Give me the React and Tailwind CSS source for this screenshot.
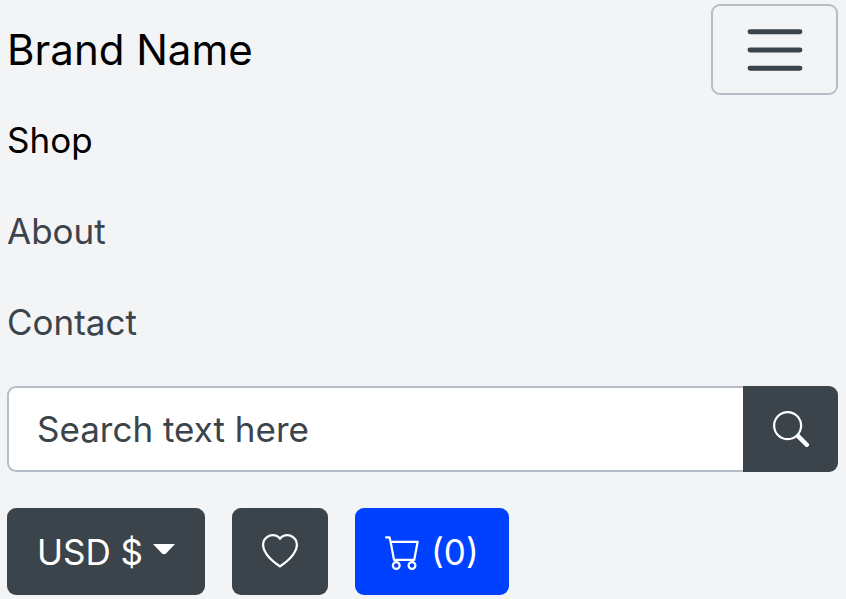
import React from "react";
import { BsSearch, BsHeart, BsCart } from "react-icons/bs";

const links = [
  { label: "Shop", active: true },
  { label: "About", active: false },
  { label: "Contact", active: false },
];

function MenuIcon() {
  return (
    <svg viewBox="0 0 30 30" className="size-[68px]" fill="none" stroke="#3b434b" strokeWidth="2.2" strokeLinecap="round" strokeMiterlimit="10" aria-hidden="true">
      <path d="M4 7h22M4 15h22M4 23h22" />
    </svg>
  );
}

function Caret() {
  return (
    <svg viewBox="0 0 22 11" className="mb-1 ml-2.5 h-[11px] w-[22px]" fill="currentColor" aria-hidden="true">
      <path d="M0 0h22L13 9.5Q11 11 9 9.5z" />
    </svg>
  );
}

export default function App() {
  return (
    <div className="min-h-screen bg-[#f3f4f6] pt-1 pr-2 pb-1 pl-[7px] font-['Inter','Liberation_Sans',sans-serif] text-[35px] leading-[54px] text-[#3b434b]">
      <header>
        <div className="flex items-center justify-between">
          <a href="#" className="text-[42px] text-black">Brand Name</a>
          <button type="button" aria-label="Toggle navigation" className="flex h-[91px] w-[127px] items-center justify-center rounded-[9px] border-2 border-[#b5bdc7]">
            <MenuIcon />
          </button>
        </div>
        <nav>
          <ul>
            {links.map((link) => (
              <li key={link.label}>
                <a href="#" className={link.active ? "block py-[18px] leading-[55px] text-black" : "block py-[18px] leading-[55px]"}>
                  {link.label}
                </a>
              </li>
            ))}
          </ul>
        </nav>
        <form className="mt-[18px] flex h-[86px]" role="search" onSubmit={(e) => e.preventDefault()}>
          <input
            type="text"
            aria-label="Search"
            placeholder="Search text here"
            className="min-w-0 flex-1 rounded-l-[9px] border-2 border-r-0 border-[#b5bdc7] bg-white px-7 placeholder:text-[#3b434b] placeholder:opacity-100"
          />
          <button type="submit" aria-label="Submit search" className="flex w-[95px] items-center justify-center rounded-r-[9px] bg-[#3b434b] text-white">
            <BsSearch className="size-9" />
          </button>
        </form>
        <div className="mt-9 flex gap-[27px]">
          <button type="button" className="flex h-[87px] items-center rounded-[9px] bg-[#3b434b] px-[30px] text-white">
            USD $
            <Caret />
          </button>
          <button type="button" aria-label="Wishlist" className="flex h-[87px] items-center rounded-[9px] bg-[#3b434b] px-[30px] text-white">
            <BsHeart className="size-9" />
          </button>
          <button type="button" aria-label="Cart" className="flex h-[87px] items-center gap-2.5 rounded-[9px] bg-[#0040ff] px-[30px] text-white">
            <BsCart className="size-9" />
            (0)
          </button>
        </div>
      </header>
    </div>
  );
}
